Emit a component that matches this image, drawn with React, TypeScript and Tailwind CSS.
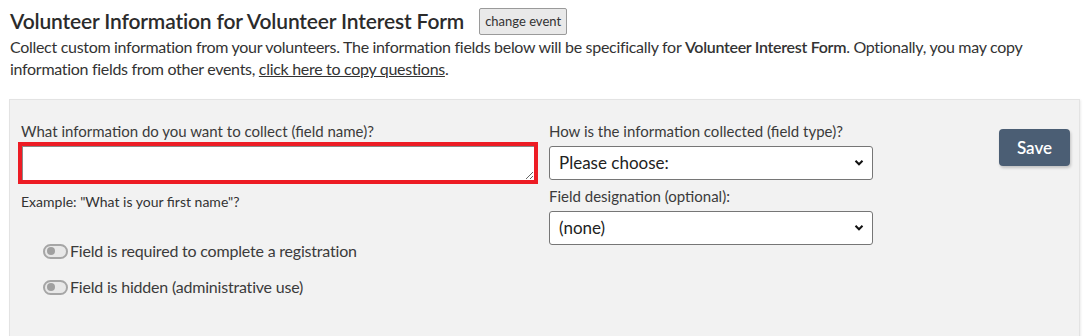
import React from "react";

function Toggle() {
  return (
    <span className="inline-flex items-center w-[25px] h-[15px] rounded-full border-2 border-[#a6a6a6] bg-[#e8e8e8] px-[2px]">
      <span className="block w-[8px] h-[8px] rounded-full bg-[#a0a0a0]" />
    </span>
  );
}

function Select({ value }: { value: string }) {
  return (
    <div className="relative w-[324px] h-[34px]">
      <select className="appearance-none w-full h-full bg-white border border-[#767676] rounded-[3px] pl-[9px] text-[17px] text-[#222] outline-none">
        <option>{value}</option>
      </select>
      <svg className="absolute right-[9px] top-[13px] pointer-events-none" width="10" height="8" viewBox="0 0 10 8">
        <path d="M1.5 1.8 L5 5.3 L8.5 1.8" stroke="#111" strokeWidth="2" fill="none" />
      </svg>
    </div>
  );
}

export default function App() {
  return (
    <div className="w-[1090px] h-[336px] overflow-hidden bg-white text-[#333] font-['Lato','Liberation_Sans',sans-serif]">
      <div className="pl-[10px] pt-[6px]">
        <div className="flex items-center gap-[15px]">
          <h1 className="text-[21px] leading-[28px] font-semibold tracking-[-0.15px] text-[#2b2b2b]">
            Volunteer Information for Volunteer Interest Form
          </h1>
          <button className="h-[27px] px-[5px] mt-[2px] text-[13px] text-[#333] bg-[#e9e9e9] border border-[#9a9a9a] rounded-[2px]">
            change event
          </button>
        </div>
        <p className="text-[16px] leading-[22px] tracking-[-0.3px] text-[#333] mt-[1px] w-[1030px]">
          Collect custom information from your volunteers. The information fields below will be specifically for{" "}
          <b className="font-semibold">Volunteer Interest Form</b>. Optionally, you may copy information fields from
          other events, <a className="underline">click here to copy questions</a>.
        </p>
      </div>
      <div className="ml-[9px] mr-[10px] mt-[19px] h-[260px] bg-[#f2f2f2] border border-[#e3e3e3] shadow-[1px_1px_2px_rgba(0,0,0,0.08)] flex pl-[11px] pt-[21px]">
        <div className="w-[528px]">
          <label className="block text-[15px] leading-[20px] text-[#3b3b3b]">
            What information do you want to collect (field name)?
          </label>
          <div className="mt-[1px] ml-[-3px] w-[520px] border-4 border-[#ed1c24]">
            <textarea className="block w-full h-[34px] bg-white border-t border-l border-[#8a8a8a] resize-y outline-none" />
          </div>
          <div className="text-[14px] leading-[18px] text-[#333] mt-[9px]">
            Example: "What is your first name"?
          </div>
          <div className="mt-[30px] ml-[22px] flex flex-col gap-[16px]">
            <div className="flex items-center gap-[2px] text-[16px] leading-[20px] tracking-[-0.2px] text-[#3b3b3b]">
              <Toggle />
              <span>Field is required to complete a registration</span>
            </div>
            <div className="flex items-center gap-[2px] text-[16px] leading-[20px] tracking-[-0.2px] text-[#3b3b3b]">
              <Toggle />
              <span>Field is hidden (administrative use)</span>
            </div>
          </div>
        </div>
        <div className="w-[450px]">
          <label className="block text-[15px] leading-[20px] text-[#3b3b3b]">
            How is the information collected (field type)?
          </label>
          <div className="mt-[5px]">
            <Select value="Please choose:" />
          </div>
          <label className="block text-[15px] leading-[20px] text-[#3b3b3b] mt-[6px]">
            Field designation (optional):
          </label>
          <div className="mt-[5px]">
            <Select value="(none)" />
          </div>
        </div>
        <div>
          <button className="mt-[8px] w-[71px] h-[37px] rounded-[4px] bg-[#4b5e74] text-white text-[17px] font-semibold shadow-[1px_2px_3px_rgba(0,0,0,0.2)]">
            Save
          </button>
        </div>
      </div>
    </div>
  );
}
